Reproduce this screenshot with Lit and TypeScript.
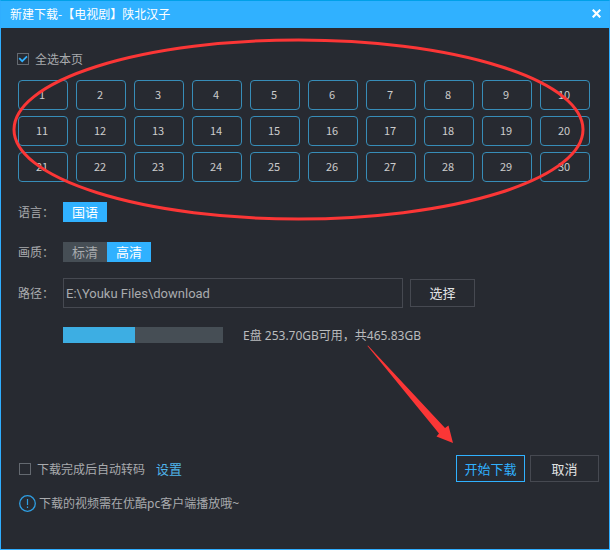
import { LitElement, html, css } from "lit";
import { customElement, state } from "lit/decorators.js";
import { classMap } from "lit/directives/class-map.js";

@customElement("app-root")
export class AppRoot extends LitElement {
  @state() private selected = new Set(Array.from({ length: 30 }, (_, i) => i + 1));
  @state() private quality = "高清";

  static styles = css`
    :host {
      display: block;
      font-family: "Noto Sans", "Noto Sans CJK SC", sans-serif;
      font-size: 12px;
      line-height: 16px;
      color: #a9abae;
    }
    * {
      box-sizing: border-box;
    }
    button,
    input {
      font: inherit;
      margin: 0;
    }
    .window {
      position: relative;
      display: flex;
      flex-direction: column;
      min-height: 100vh;
      background: #272a31;
      border: 1px solid #2faeff;
      border-top-color: #00a0e8;
    }
    .titlebar {
      display: flex;
      align-items: center;
      justify-content: space-between;
      height: 27px;
      padding: 0 8px 2px 9px;
      background: #30b1ff;
      color: #fff;
    }
    .title {
      margin: 0;
      font-family: "Noto Sans CJK SC", sans-serif;
      font-size: 12px;
      font-weight: 400;
    }
    .close {
      display: flex;
      padding: 0;
      border: 0;
      background: none;
      color: #fff;
    }
    .content {
      display: flex;
      flex: 1;
      flex-direction: column;
      padding: 22px 19px 0 17px;
    }
    .check {
      display: flex;
      align-items: center;
      gap: 6px;
    }
    .text {
      padding-top: 2px;
    }
    .box {
      display: grid;
      width: 12px;
      height: 12px;
    }
    .box input {
      grid-area: 1 / 1;
      appearance: none;
      width: 12px;
      height: 12px;
      border: 1px solid #646970;
    }
    .box svg {
      grid-area: 1 / 1;
      visibility: hidden;
      pointer-events: none;
    }
    .box input:checked + svg {
      visibility: visible;
    }
    .page {
      margin-left: -1px;
    }
    .episodes {
      display: grid;
      grid-template-columns: repeat(10, 1fr);
      gap: 6px 8px;
      margin-top: 12px;
    }
    .episode {
      height: 30px;
      padding: 0 2px 2px 0;
      border: 1px solid #50565d;
      border-radius: 4px;
      background: none;
      color: #ccc;
      font-family: "Noto Sans CJK SC", sans-serif;
      font-size: 11px;
    }
    .episode.on {
      border-color: #378db8;
    }
    .fields {
      display: grid;
      grid-template-columns: 45px 1fr;
      align-items: center;
      margin-top: 20px;
    }
    .options {
      display: flex;
      height: 20px;
      margin-bottom: 20px;
    }
    .options.last {
      margin-bottom: 16px;
    }
    .name {
      align-self: start;
      line-height: 22px;
    }
    .name.tall {
      line-height: 32px;
      height: 30px;
    }
    .option {
      position: relative;
      width: 44px;
      background: #464e55;
      font-size: 13px;
      line-height: 20px;
      text-align: center;
    }
    .option.on {
      background: #30b1ff;
      color: #fff;
    }
    .option input {
      position: absolute;
      inset: 0;
      opacity: 0;
    }
    .path {
      display: flex;
      align-items: center;
      gap: 7px;
      padding-right: 115px;
    }
    .path input {
      flex: 1;
      min-width: 0;
      height: 30px;
      padding: 0 2px;
      border: 1px solid #464951;
      background: none;
      color: #a9abae;
      font-family: Roboto, "Noto Sans CJK SC", sans-serif;
      font-size: 13px;
    }
    .button {
      width: 69px;
      height: 27px;
      padding: 0;
      border: 1px solid #464951;
      background: none;
      color: #e2e3e4;
      font-size: 13px;
    }
    .button.browse {
      width: 65px;
      height: 28px;
    }
    .button.primary {
      border-color: #30b1ff;
      color: #30b1ff;
    }
    .disk {
      display: flex;
      grid-column: 2;
      align-items: center;
      gap: 20px;
      margin-top: 18px;
      color: #b9bbbd;
    }
    progress {
      appearance: none;
      width: 160px;
      height: 16px;
      border: 0;
    }
    progress::-webkit-progress-bar {
      background: #464e55;
    }
    progress::-webkit-progress-value {
      background: #3daee3;
    }
    .footer {
      margin-top: auto;
      padding: 0 10px 37px 18px;
    }
    .actions {
      display: flex;
      align-items: center;
      gap: 5px;
      margin-bottom: 12px;
    }
    .settings {
      margin: 0 auto 0 6px;
      color: #4fb4ea;
      font-size: 13px;
      text-decoration: none;
    }
    .note {
      display: flex;
      align-items: center;
      gap: 3px;
      margin: 0;
    }
    .ring,
    .arrow {
      position: absolute;
      pointer-events: none;
    }
    .ring {
      top: 37px;
      left: 11px;
      width: calc(100% - 35px);
      height: 183px;
      overflow: visible;
    }
    .arrow {
      top: 344px;
      left: 365px;
    }
  `;

  private toggle(n: number) {
    const next = new Set(this.selected);
    if (!next.delete(n)) next.add(n);
    this.selected = next;
  }

  private toggleAll(e: Event) {
    const on = (e.target as HTMLInputElement).checked;
    this.selected = new Set(on ? Array.from({ length: 30 }, (_, i) => i + 1) : []);
  }

  private tick() {
    return html`<svg width="12" height="12" viewBox="0 0 12 12" aria-hidden="true">
      <path d="M2.2 5.2 5.2 8.2 10 3.4" fill="none" stroke="#30b1ff" stroke-width="1.7" />
    </svg>`;
  }

  private option(group: string, text: string, on: boolean) {
    return html`<label class=${classMap({ option: true, on })}>
      <input type="radio" name=${group} .checked=${on}
        @change=${() => group === "quality" && (this.quality = text)} />${text}</label>`;
  }

  render() {
    return html`
      <main class="window">
        <header class="titlebar">
          <h1 class="title">新建下载-【电视剧】陕北汉子</h1>
          <button class="close" aria-label="关闭">
            <svg width="9" height="9" viewBox="0 0 9 9">
              <path d="M0.7 0.7 8.3 8.3M8.3 0.7 0.7 8.3" stroke="currentColor" stroke-width="2.2" />
            </svg>
          </button>
        </header>

        <section class="content">
          <label class="check page">
            <span class="box">
              <input type="checkbox" .checked=${this.selected.size === 30} @change=${this.toggleAll} />
              ${this.tick()}
            </span>
            <span class="text">全选本页</span>
          </label>
          <div class="episodes">
            ${Array.from({ length: 30 }, (_, i) => i + 1).map(
              (n) => html`<button
                class=${classMap({ episode: true, on: this.selected.has(n) })}
                aria-pressed=${this.selected.has(n)}
                @click=${() => this.toggle(n)}
              >${n}</button>`
            )}
          </div>

          <div class="fields">
            <span class="name" id="language">语言：</span>
            <div class="options" role="radiogroup" aria-labelledby="language">
              ${this.option("language", "国语", true)}
            </div>
            <span class="name" id="quality">画质：</span>
            <div class="options last" role="radiogroup" aria-labelledby="quality">
              ${["标清", "高清"].map((q) => this.option("quality", q, this.quality === q))}
            </div>
            <label class="name tall" for="path">路径：</label>
            <div class="path">
              <input id="path" type="text" value="E:\\Youku Files\\download" />
              <button class="button browse">选择</button>
            </div>
            <div class="disk">
              <progress max="100" value="45" aria-labelledby="space"></progress>
              <span class="text" id="space">E盘 253.70GB可用，共465.83GB</span>
            </div>
          </div>
        </section>

        <footer class="footer">
          <div class="actions">
            <label class="check">
              <span class="box"><input type="checkbox" />${this.tick()}</span>
              <span class="text">下载完成后自动转码</span>
            </label>
            <a class="settings" href="#">设置</a>
            <button class="button primary">开始下载</button>
            <button class="button">取消</button>
          </div>
          <p class="note">
            <svg width="17" height="17" viewBox="0 0 17 17" aria-hidden="true">
              <circle cx="8.5" cy="8.5" r="7.8" fill="none" stroke="#2f9fe3" stroke-width="1.3" />
              <path d="M8.5 4V10M8.5 11.5V13" stroke="#2f9fe3" stroke-width="1.2" />
            </svg>
            <span class="text">下载的视频需在优酷pc客户端播放哦~</span>
          </p>
        </footer>

        <svg class="ring" viewBox="0 0 573 183" preserveAspectRatio="none" aria-hidden="true">
          <ellipse cx="286.5" cy="91.5" rx="284.5" ry="89.5" fill="none" stroke="#fb3636" stroke-width="3" />
        </svg>
        <svg class="arrow" width="88" height="100" viewBox="0 0 88 100" aria-hidden="true">
          <path d="M2 0.5 1.5 1 73 88.5 70.5 91.5 87 98 82.5 80.5 79 83Z" fill="#fb3636" />
        </svg>
      </main>
    `;
  }
}
